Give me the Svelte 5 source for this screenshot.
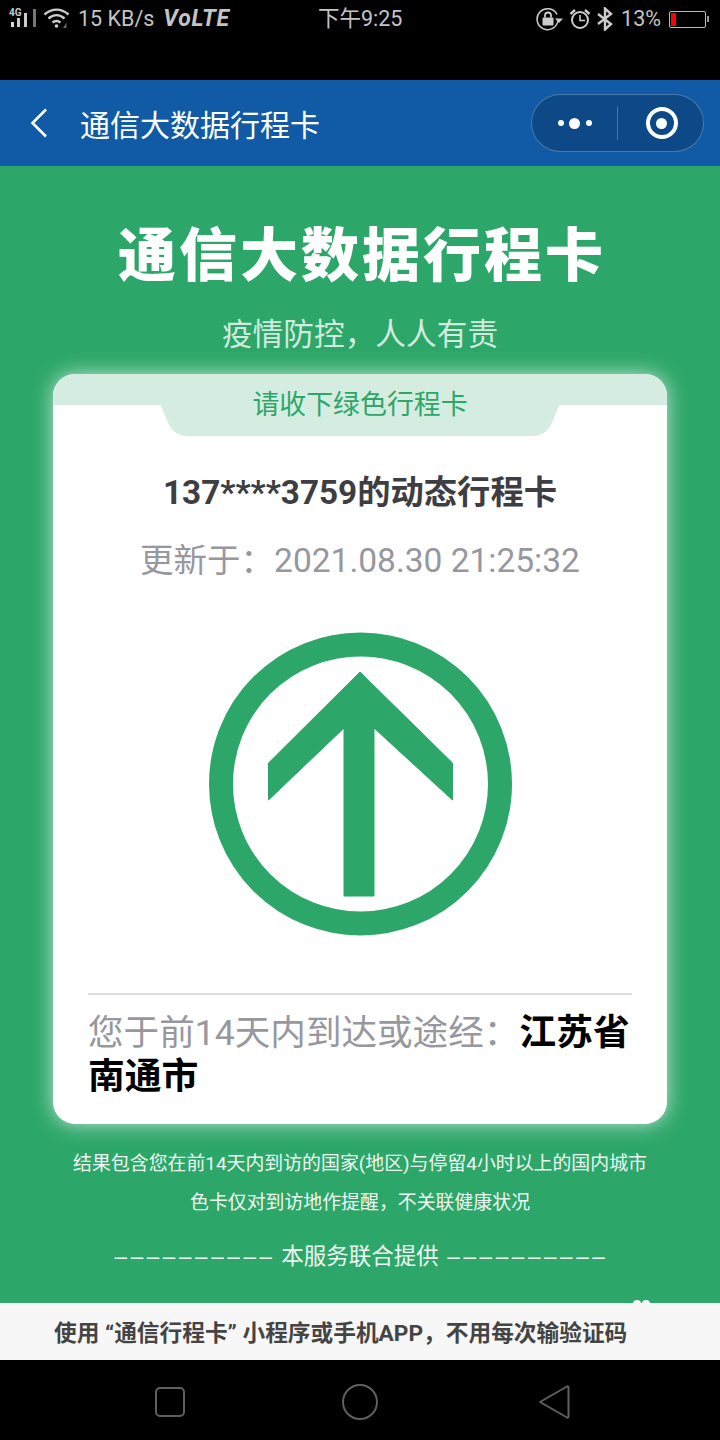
<script>
	const dashes = '––––––––––';
</script>

<div class="screen">
	<div class="status">
		<div class="status-left">
			<svg class="signal" width="33" height="28" viewBox="0 0 33 28">
				<text x="1" y="11" class="net">4G</text>
				<rect x="3" y="17" width="3" height="5" fill="#ddd" />
				<rect x="9" y="13" width="3" height="9" fill="#ccc" />
				<rect x="16" y="8" width="3" height="14" fill="#ccc" />
				<rect x="25" y="4" width="3" height="18" fill="#777" />
			</svg>
			<svg class="wifi" width="28" height="24" viewBox="0 0 28 24" fill="none" stroke="#ccc" stroke-width="2.400">
				<path d="M0.500 7.500C8 1 17 1 24.500 7.500" />
				<path d="M4.500 11.500C9.500 7 15.500 7 20.500 11.500" />
				<path d="M8.500 15.500C11 13.500 14 13.500 16.500 15.500" />
				<circle cx="12.500" cy="19" r="1.800" fill="#ccc" stroke="none" />
				<path d="M19 21l3.500-5.500v5.500z" fill="#666" stroke="none" />
			</svg>
			<span class="speed">15 KB/s</span>
			<span class="volte">VoLTE</span>
		</div>
		<span class="clock">下午9:25</span>
		<div class="status-right">
			<svg class="lock" width="28" height="24" viewBox="0 0 28 24" fill="none" stroke="#ccc" stroke-width="1.500">
				<path d="M22 13.500A10.500 10.500 0 1 1 21 7.500" />
				<rect x="6.500" y="10.500" width="11" height="8" rx="1" fill="#ccc" stroke="none" />
				<path d="M9 10.500V8.500a3 3 0 0 1 6 0v2" stroke-width="1.800" />
				<path d="M19 11.500h8l-4 4.500z" fill="#ccc" stroke="none" />
			</svg>
			<svg class="alarm" width="22" height="24" viewBox="0 0 22 24" fill="none" stroke="#ccc" stroke-width="2">
				<circle cx="11" cy="13" r="8" />
				<path d="M11 8V13.500H16" stroke-width="1.600" />
				<path d="M1.500 7L6 3M20.500 7L16 3" stroke-width="2.400" />
			</svg>
			<svg class="bluetooth" width="16" height="24" viewBox="0 0 16 24" fill="none" stroke="#ccc" stroke-width="2.400">
				<path d="M1 7L14 17L8 22.500V1.500L14 7L1 17" />
			</svg>
			<span class="battery-pct">13%</span>
			<div class="battery"><div class="battery-level"></div></div>
			<div class="battery-tip"></div>
		</div>
	</div>

	<div class="navbar">
		<svg class="back" width="18" height="30" viewBox="0 0 18 30" fill="none" stroke="#fff" stroke-width="2.600">
			<path d="M16 1.500L2.500 15L16 28.500" />
		</svg>
		<span class="nav-title">通信大数据行程卡</span>
		<div class="capsule">
			<div class="capsule-more">
				<i class="dot"></i><i class="dot big"></i><i class="dot"></i>
			</div>
			<div class="capsule-line"></div>
			<div class="capsule-close"><i></i></div>
		</div>
	</div>

	<div class="main">
		<h1>通信大数据行程卡</h1>
		<p class="slogan">疫情防控，人人有责</p>

		<div class="card">
			<div class="band">
				<div class="tab">请收下绿色行程卡</div>
			</div>
			<h2>137****3759的动态行程卡</h2>
			<p class="updated">更新于：2021.08.30 21:25:32</p>
			<svg class="arrow" width="304" height="304" viewBox="0 0 304 304">
				<circle cx="152.500" cy="152" r="139.500" fill="none" stroke="#2da769" stroke-width="24" />
				<path d="M152 40L244.500 131V168L166 96V264H136V96L60.500 168V131Z" fill="#2da769" stroke="#2da769" stroke-width="1" stroke-linejoin="round" />
			</svg>
			<div class="trip">
				<span>您于前14天内到达或途经：</span><strong>江苏省南通市</strong>
			</div>
		</div>

		<p class="note first">结果包含您在前14天内到访的国家(地区)与停留4小时以上的国内城市</p>
		<p class="note">色卡仅对到访地作提醒，不关联健康状况</p>
		<p class="partners"><span class="dashes">{dashes}</span> 本服务联合提供 <span class="dashes after">{dashes}</span></p>
		<div class="peek"><i></i><i></i></div>
	</div>

	<div class="banner">使用 “通信行程卡” 小程序或手机APP，不用每次输验证码</div>

	<div class="softkeys">
		<svg width="32" height="32" viewBox="0 0 32 32" fill="none" stroke="#5f5f5f" stroke-width="2">
			<rect x="2" y="2" width="28" height="28" rx="4" />
		</svg>
		<svg width="38" height="38" viewBox="0 0 38 38" fill="none" stroke="#5f5f5f" stroke-width="2">
			<circle cx="19" cy="19" r="17" />
		</svg>
		<svg class="softback" width="32" height="36" viewBox="0 0 32 36" fill="none" stroke="#5f5f5f" stroke-width="2" stroke-linejoin="round">
			<path d="M2 18L29 2.500C30 2 30.500 2.500 30.500 3.500V32.500C30.500 33.500 30 34 29 33.500Z" />
		</svg>
	</div>
</div>

<style>
	:global(body) {
		margin: 0;
		background: #000;
	}
	.screen {
		width: 720px;
		height: 1440px;
		display: flex;
		flex-direction: column;
		overflow: hidden;
		font-family: Roboto, "Noto Sans CJK SC", sans-serif;
	}
	.status {
		height: 80px;
		flex: none;
		background: #000;
		color: #c4c4c4;
		display: flex;
		align-items: flex-start;
		padding: 4px 11px 0 8px;
		box-sizing: border-box;
		position: relative;
		font-size: 21.500px;
		line-height: 30px;
	}
	.status-left {
		display: flex;
		align-items: center;
		gap: 3px;
	}
	.net {
		font-size: 10px;
		font-weight: 700;
		fill: #ccc;
	}
	.speed {
		margin-left: 3px;
	}
	.volte {
		margin-left: 6px;
		font-size: 23px;
		font-weight: 700;
		font-style: italic;
		letter-spacing: 0.8px;
	}
	.clock {
		position: absolute;
		left: 318px;
		top: 4px;
	}
	.status-right {
		margin-left: auto;
		display: flex;
		align-items: center;
	}
	.alarm {
		margin-left: 5px;
	}
	.bluetooth {
		margin-left: 6px;
	}
	.battery-pct {
		margin: 0 8px 0 8px;
	}
	.battery {
		width: 37px;
		height: 17px;
		border: 1px solid #bbb;
		border-radius: 2px;
		padding: 1px;
		box-sizing: border-box;
	}
	.battery-level {
		width: 5px;
		height: 100%;
		background: #f00;
	}
	.battery-tip {
		width: 2px;
		height: 6px;
		background: #999;
		margin-left: 1px;
	}
	.navbar {
		height: 86px;
		flex: none;
		background: #115aa5;
		display: flex;
		align-items: center;
		padding: 0 16px 0 30px;
		box-sizing: border-box;
	}
	.nav-title {
		margin-left: 32px;
		color: #fff;
		font-size: 30px;
	}
	.capsule {
		margin-left: auto;
		width: 173px;
		height: 58px;
		box-sizing: border-box;
		border-radius: 29px;
		border: 1px solid rgba(255, 255, 255, 0.25);
		background: rgba(0, 0, 0, 0.18);
		display: flex;
		align-items: center;
	}
	.capsule-more {
		width: 85px;
		display: flex;
		justify-content: center;
		align-items: center;
		gap: 5.500px;
	}
	.dot {
		width: 6px;
		height: 6px;
		border-radius: 50%;
		background: #fff;
	}
	.dot.big {
		width: 11px;
		height: 11px;
	}
	.capsule-line {
		width: 1px;
		height: 34px;
		background: rgba(255, 255, 255, 0.25);
	}
	.capsule-close {
		flex: 1;
		display: flex;
		justify-content: center;
		padding-left: 2px;
	}
	.capsule-close i {
		width: 32px;
		height: 32px;
		box-sizing: border-box;
		border: 4px solid #fff;
		border-radius: 50%;
		display: flex;
		align-items: center;
		justify-content: center;
	}
	.capsule-close i::after {
		content: "";
		width: 11px;
		height: 11px;
		border-radius: 50%;
		background: #fff;
	}
	.main {
		flex: 1;
		min-height: 0;
		background: #2da769;
		display: flex;
		flex-direction: column;
		align-items: center;
		position: relative;
		overflow: hidden;
	}
	h1 {
		margin: 52px 0 0;
		padding-left: 4px;
		font-size: 58px;
		line-height: 76px;
		font-weight: 900;
		letter-spacing: 3px;
		color: #fff;
	}
	.slogan {
		margin: 19px 0 0;
		font-size: 30.700px;
		line-height: 44px;
		color: rgba(255, 255, 255, 0.78);
	}
	.card {
		width: 614px;
		height: 750px;
		flex: none;
		margin-top: 17px;
		background: #fff;
		border-radius: 22px;
		box-shadow: 0 0 20px rgba(255, 255, 255, 0.7);
		display: flex;
		flex-direction: column;
		align-items: center;
		overflow: hidden;
	}
	.band {
		align-self: stretch;
		height: 31px;
		flex: none;
		background: #d5ede0;
		display: flex;
		justify-content: center;
	}
	.tab {
		width: 399px;
		height: 62px;
		flex: none;
		background: #d5ede0;
		clip-path: path("M0 0H399V31L390 52C385 59 380 62 372 62H27C19 62 14 59 9 52L0 31Z");
		color: #2da769;
		font-size: 26.900px;
		line-height: 62px;
		text-align: center;
	}
	h2 {
		margin: 66px 0 0;
		font-size: 33.300px;
		line-height: 44px;
		font-weight: 700;
		color: #3d3d42;
	}
	.updated {
		margin: 24px 0 0;
		font-size: 33.500px;
		line-height: 44px;
		color: #97979e;
	}
	.arrow {
		margin-top: 49px;
		flex: none;
	}
	.trip {
		margin-top: 57px;
		width: 544px;
		border-top: 2px solid #dedede;
		padding-top: 16px;
		font-size: 35.600px;
		line-height: 44px;
		color: #97979e;
	}
	.trip strong {
		font-size: 36.800px;
		font-weight: 700;
		color: #000;
	}
	.note {
		margin: 0;
		font-size: 18.900px;
		line-height: 39px;
		color: #fff;
		opacity: 0.92;
	}
	.note.first {
		margin-top: 20px;
	}
	.partners {
		margin: 16px 0 0;
		padding-left: 3px;
		font-size: 22.500px;
		line-height: 36px;
		color: #fff;
		opacity: 0.92;
		white-space: pre;
	}
	.dashes {
		font-family: "Liberation Sans", sans-serif;
		letter-spacing: 3.600px;
	}
	.dashes.after {
		margin-left: 3px;
	}
	.peek {
		position: absolute;
		left: 633px;
		bottom: -5px;
		display: flex;
		gap: 1px;
	}
	.peek i {
		width: 8px;
		height: 8px;
		border-radius: 50%;
		background: #fff;
	}
	.banner {
		height: 57px;
		flex: none;
		background: #f7f7f7;
		padding-left: 54px;
		box-sizing: border-box;
		font-size: 22.700px;
		line-height: 62px;
		font-weight: 700;
		color: #444;
	}
	.softkeys {
		height: 80px;
		flex: none;
		background: #000;
		display: flex;
		align-items: center;
		gap: 155px;
		padding: 4px 0 0 154px;
		box-sizing: border-box;
	}
	.softback {
		margin-left: 4px;
	}
</style>
